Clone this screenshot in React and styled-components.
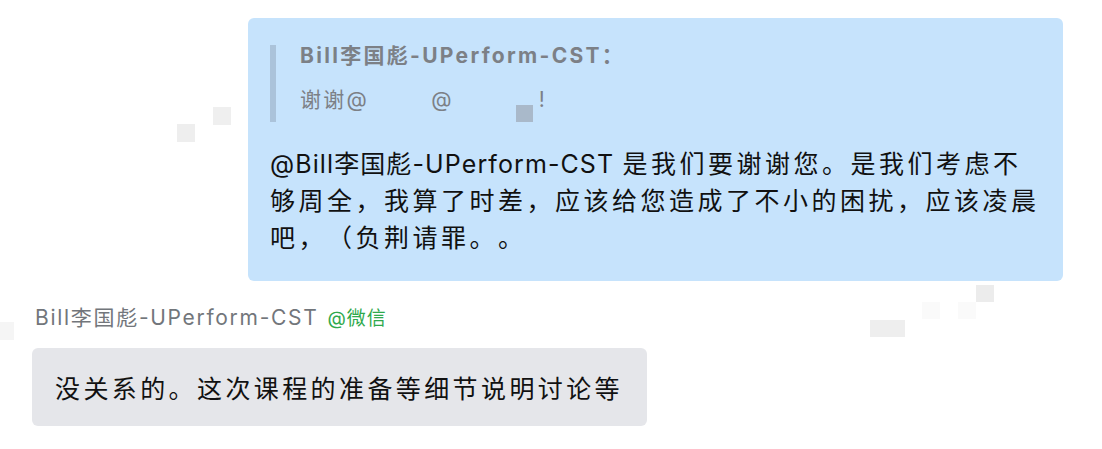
import React from "react";
import styled, { createGlobalStyle } from "styled-components";

const Global = createGlobalStyle`
  html, body { margin: 0; padding: 0; background: #ffffff; }
  body {
    font-family: "Inter", "Noto Sans CJK SC", sans-serif;
    text-spacing-trim: space-all;
  }
`;

const Page = styled.div`
  position: relative;
  width: 1102px;
  height: 449px;
  overflow: hidden;
  padding-top: 18px;
  box-sizing: border-box;
  display: flex;
  flex-direction: column;
`;

const Mosaic = styled.span`
  position: absolute;
  display: block;
  background: ${(p) => p.$c || "#efefef"};
`;

const SelfRow = styled.div`
  display: flex;
  justify-content: flex-end;
  padding-right: 39px;
`;

const SelfBubble = styled.div`
  width: 815px;
  height: 263px;
  box-sizing: border-box;
  background: #c6e3fc;
  border-radius: 6px;
  padding: 27px 22px 0 22px;
  display: flex;
  flex-direction: column;
`;

const Quote = styled.div`
  border-left: 6px solid #abc3da;
  padding-left: 24px;
  display: flex;
  flex-direction: column;
  color: #7c8086;
  font-size: 21px;
  letter-spacing: 2.3px;
`;

const QuoteName = styled.div`
  font-weight: 700;
  line-height: 20px;
  margin-top: 1px;
`;

const QuoteText = styled.div`
  margin-top: 12px;
  line-height: 44px;
  display: flex;
  align-items: center;
`;

const Redacted = styled.span`
  display: inline-block;
  width: ${(p) => p.$w}px;
`;

const MaskBlock = styled.span`
  display: inline-block;
  width: 17px;
  height: 17px;
  background: #a9b9ca;
  align-self: flex-end;
  margin-bottom: 0;
  margin-right: 6px;
`;

const Body = styled.div`
  margin-top: 24px;
  font-size: 25px;
  letter-spacing: 3.5px;
  line-height: 37px;
  color: #111111;
`;

const Line = styled.div`
  white-space: nowrap;
`;

const Mention = styled.span`
  letter-spacing: 1.1px;
`;

const PeerBlock = styled.div`
  display: flex;
  flex-direction: column;
  padding-left: 32px;
  margin-top: 25px;
`;

const NameRow = styled.div`
  display: flex;
  align-items: baseline;
  padding-left: 3px;
  height: 24px;
  line-height: 24px;
`;

const PeerName = styled.span`
  font-size: 21px;
  letter-spacing: 1.7px;
  color: #72767b;
`;

const Source = styled.span`
  margin-left: 9px;
  font-size: 19px;
  letter-spacing: 1px;
  color: #2fa94c;
`;

const PeerBubble = styled.div`
  margin-top: 18px;
  width: 615px;
  height: 78px;
  box-sizing: border-box;
  background: #e5e6ea;
  border-radius: 6px;
  padding: 0 23px;
  display: flex;
  align-items: center;
  font-size: 25px;
  letter-spacing: 3.4px;
  color: #111111;
  white-space: nowrap;
`;

const mosaics = [
  { x: 177, y: 124, w: 18, h: 18, c: "#eeeeee" },
  { x: 213, y: 107, w: 18, h: 18, c: "#efefef" },
  { x: 976, y: 285, w: 18, h: 17, c: "#ececec" },
  { x: 870, y: 320, w: 35, h: 17, c: "#eeeeee" },
  { x: 958, y: 302, w: 18, h: 17, c: "#fafafa" },
  { x: 922, y: 302, w: 18, h: 17, c: "#fafafa" },
  { x: 0, y: 322, w: 14, h: 18, c: "#f5f5f5" },
];

export default function App() {
  return (
    <>
      <Global />
      <Page>
        {mosaics.map((m, i) => (
          <Mosaic
            key={i}
            $c={m.c}
            style={{ left: m.x, top: m.y, width: m.w, height: m.h }}
          />
        ))}
        <SelfRow>
          <SelfBubble>
            <Quote>
              <QuoteName>Bill李国彪-UPerform-CST：</QuoteName>
              <QuoteText>
                <span>谢谢@</span>
                <Redacted $w={62} />
                <span>@</span>
                <Redacted $w={62} />
                <MaskBlock />
                <span>!</span>
              </QuoteText>
            </Quote>
            <Body>
              <Line>
                <Mention>@Bill李国彪-UPerform-CST </Mention>是我们要谢谢您。是我们考虑不
              </Line>
              <Line>够周全，我算了时差，应该给您造成了不小的困扰，应该凌晨</Line>
              <Line>吧，（负荆请罪。。</Line>
            </Body>
          </SelfBubble>
        </SelfRow>
        <PeerBlock>
          <NameRow>
            <PeerName>Bill李国彪-UPerform-CST</PeerName>
            <Source>@微信</Source>
          </NameRow>
          <PeerBubble>没关系的。这次课程的准备等细节说明讨论等</PeerBubble>
        </PeerBlock>
      </Page>
    </>
  );
}
